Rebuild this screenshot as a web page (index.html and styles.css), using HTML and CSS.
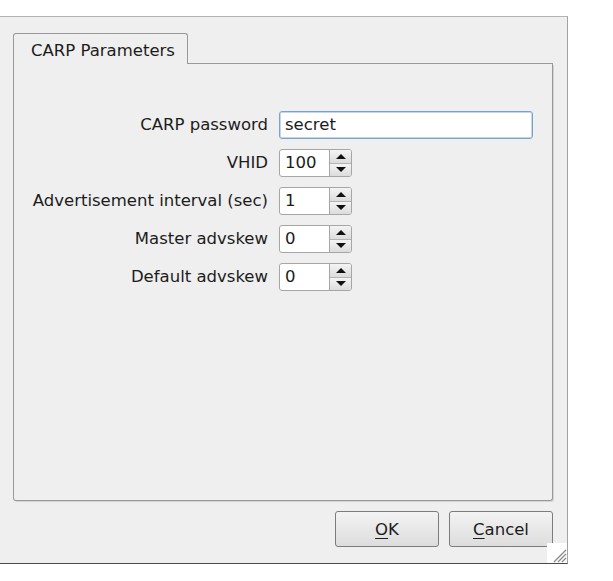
FILE: index.html
```html
<!DOCTYPE html>
<html>
<head>
<meta charset="utf-8">
<link rel="stylesheet" href="styles.css">
</head>
<body>
<div class="window">
  <div class="tabwidget">
    <div class="tabbar">
      <div class="tab">CARP Parameters</div>
      <div class="tabfill"></div>
    </div>
    <div class="pane">
      <div class="form">
        <div class="lbl">CARP password</div>
        <div class="lineedit focus">secret</div>

        <div class="lbl">VHID</div>
        <div class="spin"><span class="val">100</span><span class="btns"><span class="sb up"><i></i></span><span class="sb down"><i></i></span></span></div>

        <div class="lbl">Advertisement interval (sec)</div>
        <div class="spin"><span class="val">1</span><span class="btns"><span class="sb up"><i></i></span><span class="sb down"><i></i></span></span></div>

        <div class="lbl">Master advskew</div>
        <div class="spin"><span class="val">0</span><span class="btns"><span class="sb up"><i></i></span><span class="sb down"><i></i></span></span></div>

        <div class="lbl">Default advskew</div>
        <div class="spin"><span class="val">0</span><span class="btns"><span class="sb up"><i></i></span><span class="sb down"><i></i></span></span></div>
      </div>
    </div>
  </div>
  <div class="buttons">
    <button class="btn"><u>O</u>K</button>
    <button class="btn"><u>C</u>ancel</button>
  </div>
  <div class="grip">
    <svg width="20" height="20" viewBox="0 0 20 20">
      <path d="M19 7 L7 19 M19 11 L11 19 M19 15 L15 19" stroke="#8a8a8a" stroke-width="1.4" fill="none"/>
      <path d="M19 8 L8 19 M19 12 L12 19 M19 16 L16 19" stroke="#d0d0d0" stroke-width="1" fill="none"/>
    </svg>
  </div>
</div>
</body>
</html>
```

FILE: styles.css
```css
html, body {
  margin: 0;
  padding: 0;
  background: #ffffff;
}

body {
  font-family: "DejaVu Sans", sans-serif;
  font-size: 16.5px;
  color: #1c1c1c;
}

.window {
  position: relative;
  box-sizing: border-box;
  margin-top: 16px;
  width: 568px;
  height: 548px;
  background: #efefef;
  border-top: 1px solid #b4b4b4;
  border-right: 1px solid #a3a3a3;
  border-bottom: 1px solid #4a4a4a;
  box-shadow: 0 1px 0 #9a9a9a;
  padding: 16px 14px 16px 13px;
  display: flex;
  flex-direction: column;
  gap: 10px;
}

.tabwidget {
  flex: 1;
  display: flex;
  flex-direction: column;
}

.tabbar {
  display: flex;
  height: 31px;
}

.tab {
  box-sizing: border-box;
  width: 175px;
  height: 31px;
  border: 1px solid #999999;
  border-bottom: none;
  border-radius: 3px 3px 0 0;
  padding: 6px 0 0 17px;
  line-height: 21px;
  color: #1c1c1c;
  white-space: nowrap;
}

.tabfill {
  flex: 1;
  box-sizing: border-box;
  height: 31px;
  border-bottom: 1px solid #999999;
}

.pane {
  flex: 1;
  box-sizing: border-box;
  border: 1px solid #999999;
  border-top: none;
  border-radius: 0 0 3px 3px;
  box-shadow: 1px 1px 0 #d4d4d4;
  padding: 47px 19px 0 17px;
}

.form {
  display: grid;
  grid-template-columns: 237px 1fr;
  column-gap: 11px;
  row-gap: 10px;
  align-items: center;
}

.lbl {
  text-align: right;
  white-space: nowrap;
  line-height: 28px;
}

.lineedit {
  box-sizing: border-box;
  height: 28px;
  background: #ffffff;
  border: 1px solid #a6a6a6;
  border-radius: 3px;
  padding: 0 5px;
  line-height: 26px;
}

.lineedit.focus {
  border-color: #7ba2cf;
  box-shadow: inset 0 0 0 1px #c3d6ec;
}

.spin {
  box-sizing: border-box;
  width: 73px;
  height: 28px;
  display: flex;
  background: #ffffff;
  border: 1px solid #a6a6a6;
  border-radius: 3px;
  overflow: hidden;
}

.spin .val {
  flex: 1;
  padding-left: 5px;
  line-height: 26px;
}

.btns {
  width: 21px;
  display: flex;
  flex-direction: column;
  border-left: 1px solid #a6a6a6;
}

.sb {
  flex: 1;
  display: flex;
  align-items: center;
  justify-content: center;
  background: linear-gradient(#f4f4f4, #dcdcdc);
}

.sb.up {
  border-bottom: 1px solid #b4b4b4;
}

.sb i {
  display: block;
  width: 0;
  height: 0;
  border-left: 5px solid transparent;
  border-right: 5px solid transparent;
}

.sb.up i {
  border-bottom: 5px solid #111111;
}

.sb.down i {
  border-top: 5px solid #111111;
}

.buttons {
  display: flex;
  justify-content: flex-end;
  gap: 10px;
  height: 36px;
}

.btn {
  box-sizing: border-box;
  width: 104px;
  height: 36px;
  font-family: "DejaVu Sans", sans-serif;
  font-size: 16.5px;
  color: #1c1c1c;
  background: linear-gradient(#f3f3f3, #dddddd);
  border: 1px solid #7c7c7c;
  border-radius: 3px;
  padding: 0;
}

.btn u {
  text-decoration-thickness: 1px;
  text-underline-offset: 3px;
}

.grip {
  position: absolute;
  right: 0;
  bottom: 0;
  width: 20px;
  height: 20px;
  background: #ffffff;
}

.grip svg {
  display: block;
}
```
